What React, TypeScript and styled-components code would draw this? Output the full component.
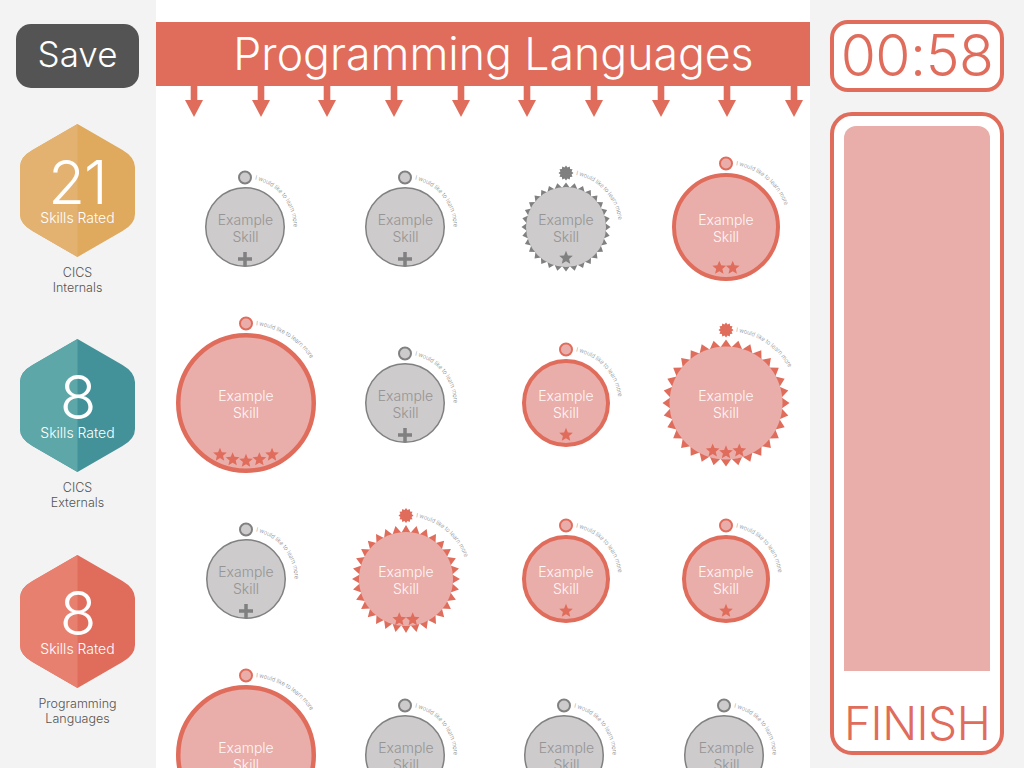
import React from "react";
import styled, { createGlobalStyle } from "styled-components";

const RED = "#e06c5c";
const PALE = "#eaaeaa";
const GREY = "#808080";
const GREY_FILL = "#cdcbcc";

const Global = createGlobalStyle`
  html, body { margin: 0; padding: 0; height: 100%; overflow: hidden; background: #f3f3f3; }
  body { font-family: Inter, "Liberation Sans", sans-serif; font-weight: 300; }
`;

const Page = styled.div`
  display: grid;
  grid-template-columns: 156px 654px 214px;
  width: 1024px;
  height: 768px;
  overflow: hidden;
`;

const LeftBar = styled.aside`
  display: flex;
  flex-direction: column;
  align-items: center;
  padding: 24px 1px 0 0;
  background: #f3f3f3;
`;

const SaveButton = styled.button`
  width: 123px;
  height: 64px;
  margin: 0 0 35.75px;
  padding: 0 0 4px;
  border: 0;
  border-radius: 15px;
  background: #545454;
  color: #fff;
  font: 300 35px Inter, "Liberation Sans", sans-serif;
`;

const Group = styled.section`
  display: flex;
  flex-direction: column;
  align-items: center;
  height: 215.5px;
`;

const Hex = styled.div`
  position: relative;
  display: flex;
  flex-direction: column;
  align-items: center;
  width: 116px;
  height: 133px;
  color: #fff;
`;

const HexArt = styled.svg`
  position: absolute;
  inset: 0;
`;

const HexNumber = styled.div`
  position: relative;
  margin-top: 28px;
  font-size: 60px;
  line-height: 60px;
  letter-spacing: -1px;
`;

const HexCaption = styled.div`
  position: relative;
  margin-top: -3px;
  font-size: 14px;
  line-height: 18px;
  white-space: nowrap;
`;

const GroupLabel = styled.div`
  margin-top: 8px;
  color: #555;
  font-size: 12.5px;
  line-height: 15px;
  text-align: center;
`;

const Center = styled.main`
  background: #fff;
  padding-top: 22px;
  overflow: hidden;
`;

const Banner = styled.h1`
  display: flex;
  align-items: center;
  justify-content: center;
  box-sizing: border-box;
  height: 64px;
  margin: 0;
  padding-left: 21px;
  background: ${RED};
  color: #fff;
  font-size: 44.6px;
  font-weight: 300;
  white-space: nowrap;
`;

const ArrowRow = styled.div`
  display: flex;
  justify-content: space-between;
  padding: 0 7px 0 29px;
`;

const Grid = styled.div`
  display: grid;
  grid-template-columns: repeat(4, 160px);
  grid-auto-rows: 176px;
  padding: 22px 0 0 10px;
`;

const Cell = styled.div<{ $nudge?: number }>`
  position: relative;
  display: flex;
  align-items: center;
  justify-content: center;
  margin-left: ${(p) => p.$nudge ?? 0}px;
`;

const SkillArt = styled.svg<{ $shift?: number }>`
  position: absolute;
  top: 0;
  left: ${(p) => p.$shift ?? 0}px;
  overflow: visible;
`;

const SkillName = styled.div<{ $on: boolean }>`
  position: relative;
  margin-top: 3px;
  color: ${(p) => (p.$on ? "rgba(255,255,255,.92)" : "#969495")};
  font-size: 14px;
  line-height: 16.5px;
  text-align: center;
`;

const RightBar = styled.aside`
  display: flex;
  flex-direction: column;
  gap: 20px;
  padding: 20px 20px 15px;
  background: #f3f3f3;
`;

const Timer = styled.div`
  display: flex;
  align-items: center;
  justify-content: center;
  box-sizing: border-box;
  height: 72px;
  padding-bottom: 2px;
  border: 4px solid ${RED};
  border-radius: 18px;
  background: #fff;
  color: ${RED};
  font-size: 57px;
  font-weight: 300;
  letter-spacing: -0.5px;
`;

const FinishPanel = styled.div`
  display: flex;
  flex: 1;
  flex-direction: column;
  box-sizing: border-box;
  padding: 10px 10px 0;
  border: 4px solid ${RED};
  border-radius: 22px;
  background: #fff;
`;

const FinishFill = styled.div`
  flex: 1;
  border-radius: 12px 12px 0 0;
  background: ${PALE};
`;

const FinishLabel = styled.div`
  box-sizing: border-box;
  height: 80px;
  padding-top: 25px;
  color: ${RED};
  font-size: 46px;
  font-weight: 300;
  line-height: 54px;
  letter-spacing: -0.5px;
  text-align: center;
`;

const Label = styled.text`
  fill: #8a8a8a;
  font-size: 6.2px;
  font-weight: 300;
`;

const Arrow = () => (
  <svg width="18" height="31" viewBox="0 0 18 31">
    <path d="M5.7 0h6.6v14H18L9 31 0 14h5.7z" fill={RED} />
  </svg>
);

const HEX = "M57.5 0L102.5 26Q114.5 33 115 43V90Q115 100 102.5 107L57.5 133L12.5 107Q0 100 0 90V43Q0 33 12.5 26Z";
const HEX_LEFT = "M57.5 0V133L12.5 107Q0 100 0 90V43Q0 33 12.5 26Z";

const SkillHex = ({ n, light, dark, label }: { n: number; light: string; dark: string; label: string[] }) => (
  <Group>
    <Hex>
      <HexArt width="116" height="133" viewBox="0 0 116 133">
        <path d={HEX} fill={dark} />
        <path d={HEX_LEFT} fill={light} />
      </HexArt>
      <HexNumber>{n}</HexNumber>
      <HexCaption>Skills Rated</HexCaption>
    </Hex>
    <GroupLabel>
      {label[0]}
      <br />
      {label[1]}
    </GroupLabel>
  </Group>
);

const starPath = (cx: number, cy: number, r: number) => {
  const pts: string[] = [];
  for (let i = 0; i < 10; i++) {
    const a = (-90 + i * 36) * (Math.PI / 180);
    const rr = i % 2 ? r * 0.45 : r;
    pts.push(`${(cx + rr * Math.cos(a)).toFixed(2)},${(cy + rr * Math.sin(a)).toFixed(2)}`);
  }
  return pts.join(" ");
};

const burst = (rOut: number, rIn: number, n: number) => {
  const pts: string[] = [];
  for (let i = 0; i < n * 2; i++) {
    const a = (i * Math.PI) / n - Math.PI / 2;
    const rr = i % 2 ? rIn : rOut;
    pts.push(`${(rr * Math.cos(a)).toFixed(2)},${(rr * Math.sin(a)).toFixed(2)}`);
  }
  return pts.join(" ");
};

type SkillProps = {
  on?: boolean;
  r: number;
  ring?: number;
  outer?: number;
  stars?: number;
  starR?: number;
  plus?: boolean;
  nudge?: number;
  artShift?: number;
};

let uid = 0;

const Skill = ({ on = false, r, ring = 4, outer, stars = 0, starR = 0, plus, nudge, artShift }: SkillProps) => {
  const id = React.useMemo(() => `arc${uid++}`, []);
  const main = on ? RED : GREY;
  const fill = on ? PALE : GREY_FILL;
  const rOuter = outer ?? r;
  const dotD = rOuter + 9.5;
  const textR = dotD - 1;
  const a0 = Math.asin(10 / textR);
  const a1 = a0 + 2.4;
  const arc = `M${(textR * Math.sin(a0)).toFixed(2)} ${(-textR * Math.cos(a0)).toFixed(2)}A${textR} ${textR} 0 0 1 ${(
    textR * Math.sin(a1)
  ).toFixed(2)} ${(-textR * Math.cos(a1)).toFixed(2)}`;
  return (
    <Cell $nudge={nudge}>
      <SkillArt $shift={artShift} width="160" height="176" viewBox="-80 -88 160 176">
        {outer ? (
          <>
            <polygon points={burst(outer, r - 0.5, 32)} fill={main} />
            <circle r={r} fill={fill} />
            <g transform={`translate(0 ${-dotD})`}>
              <polygon points={burst(7.5, 5.8, 12)} fill={main} />
            </g>
          </>
        ) : (
          <>
            <circle r={r - ring / 2} fill={fill} stroke={main} strokeWidth={ring} />
            <circle cy={-dotD} r={6} fill={fill} stroke={main} strokeWidth={2} />
          </>
        )}
        <path id={id} d={arc} fill="none" />
        <Label>
          <textPath href={`#${id}`} textLength={66} lengthAdjust="spacingAndGlyphs">
            I would like to learn more
          </textPath>
        </Label>
        {Array.from({ length: stars }).map((_, i) => {
          const ang = ((i - (stars - 1) / 2) * 13.5) / starR;
          return (
            <polygon
              key={i}
              points={starPath(starR * Math.sin(ang), starR * Math.cos(ang), 7.2)}
              fill={main}
            />
          );
        })}
        {plus && <path d="M-7 32h14M0 25v14" stroke={GREY} strokeWidth={3.5} fill="none" />}
      </SkillArt>
      <SkillName $on={on}>
        Example
        <br />
        Skill
      </SkillName>
    </Cell>
  );
};

const Plain = ({ nudge, artShift }: { nudge?: number; artShift?: number }) => (
  <Skill r={40} ring={1.5} plus nudge={nudge} artShift={artShift} />
);
const One = () => <Skill on r={44} stars={1} starR={32} />;

export default function App() {
  return (
    <Page>
      <Global />
      <LeftBar>
        <SaveButton>Save</SaveButton>
        <SkillHex n={21} light="#e3b271" dark="#dfa95e" label={["CICS", "Internals"]} />
        <SkillHex n={8} light="#5da7a8" dark="#43929a" label={["CICS", "Externals"]} />
        <SkillHex n={8} light="#e8806f" dark={RED} label={["Programming", "Languages"]} />
      </LeftBar>
      <Center>
        <Banner>Programming Languages</Banner>
        <ArrowRow>
          {Array.from({ length: 10 }).map((_, i) => (
            <Arrow key={i} />
          ))}
        </ArrowRow>
        <Grid>
          <Plain nudge={-1} />
          <Plain nudge={-1} />
          <Skill r={40} outer={44.5} stars={1} starR={31} />
          <Skill on r={54} stars={2} starR={41.5} />

          <Skill on r={70} ring={4.5} stars={5} starR={58} />
          <Plain nudge={-1} />
          <One />
          <Skill on r={56.5} outer={63.5} stars={3} starR={49.5} />

          <Plain />
          <Skill on r={47} outer={54} stars={2} starR={41} />
          <One />
          <One />

          <Skill on r={70} ring={4.5} stars={5} starR={58} />
          <Plain artShift={-1.5} />
          <Plain nudge={1} artShift={-3} />
          <Plain nudge={1} artShift={-3} />
        </Grid>
      </Center>
      <RightBar>
        <Timer>00:58</Timer>
        <FinishPanel>
          <FinishFill />
          <FinishLabel>FINISH</FinishLabel>
        </FinishPanel>
      </RightBar>
    </Page>
  );
}
